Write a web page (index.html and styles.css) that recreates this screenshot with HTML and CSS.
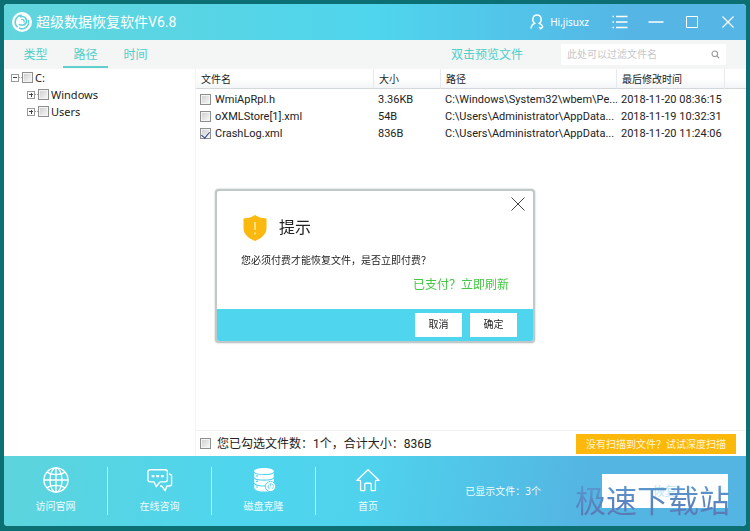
FILE: index.html
```html
<!DOCTYPE html>
<html lang="zh-CN">
<head>
<meta charset="utf-8">
<meta name="viewport" content="width=device-width, initial-scale=1">
<title>超级数据恢复软件V6.8</title>
<link rel="stylesheet" href="styles.css">
</head>
<body>
<div class="window">
  <header class="titlebar">
    <svg class="logo" viewBox="0 0 20 20"><circle cx="10" cy="10" r="10" fill="#fff"/><path d="M5.200 14.800A6.800 6.800 0 0 1 9 3.300M7.500 16.300A6.800 6.800 0 0 0 16.500 8.500M8.500 4.700c4.500-1 7.500 3 5.500 6.300-1.200 2-4 2.600-6.500 1.500" fill="none" stroke="#5fd2da" stroke-width="1.600" stroke-linecap="round"/><path d="M9 7.500c2.500-.5 4 1.500 2.800 3.200" fill="none" stroke="#5fd2da" stroke-width="1.300"/></svg>
    <h1 class="app-name">超级数据恢复软件V6.8</h1>
    <button class="user" type="button">
      <svg viewBox="0 0 14 16"><path d="M1 14.500c.3-3 1.700-4.500 3.700-5.200C1.500 7 2.400 1 7 1s5.500 6 2.300 8.300c1.700.8 2.900 2 3.300 3.200M9 13l1.800 1.800L13 12.500" fill="none" stroke="#fff" stroke-width="1.400"/></svg>
      <span>Hi,jisuxz</span>
    </button>
    <button class="control" type="button" aria-label="菜单"><svg viewBox="0 0 16 14"><path d="M4 1.500h11.500M4 7h11.500M4 12.500h11.500M.5 1.500H2M.5 7H2M.5 12.500H2" stroke="#fff" stroke-width="1.400"/></svg></button>
    <button class="control" type="button" aria-label="最小化"><svg viewBox="0 0 16 14"><path d="M.5 7h15" stroke="#fff" stroke-width="1.500"/></svg></button>
    <button class="control" type="button" aria-label="最大化"><svg viewBox="0 0 16 14"><path d="M2.500 1.500h11v11h-11z" fill="none" stroke="#fff"/></svg></button>
    <button class="control" type="button" aria-label="关闭"><svg viewBox="0 0 16 14"><path d="M2.500 1.500l11 11M13.500 1.500l-11 11" stroke="#fff" stroke-width="1.200"/></svg></button>
  </header>

  <div class="toolbar">
    <nav class="tabs">
      <a class="tab" href="#type">类型</a>
      <a class="tab tab-active" href="#path">路径</a>
      <a class="tab" href="#time">时间</a>
    </nav>
    <span class="hint">双击预览文件</span>
    <form class="search">
      <input type="text" aria-label="过滤文件名" placeholder="此处可以过滤文件名">
      <button type="button" aria-label="搜索"><svg viewBox="0 0 10 10"><circle cx="4.200" cy="4.200" r="3.100" fill="none" stroke="#999" stroke-width="1.200"/><path d="M6.500 6.500L9 9" stroke="#999" stroke-width="1.400"/></svg></button>
    </form>
  </div>

  <main class="content">
    <aside class="sidebar">
      <ul class="tree">
        <li>
          <div class="node"><button class="toggle toggle-open" type="button" aria-label="折叠 C:"></button><label><input class="check" type="checkbox"><span>C:</span></label></div>
          <ul class="branch">
            <li class="node"><button class="toggle" type="button" aria-label="展开 Windows"></button><label><input class="check" type="checkbox"><span>Windows</span></label></li>
            <li class="node"><button class="toggle" type="button" aria-label="展开 Users"></button><label><input class="check" type="checkbox"><span>Users</span></label></li>
          </ul>
        </li>
      </ul>
    </aside>
    <section class="files">
      <table class="file-table">
        <colgroup><col class="col-name"><col class="col-size"><col class="col-path"><col class="col-date"><col class="col-rest"></colgroup>
        <thead><tr><th>文件名</th><th>大小</th><th>路径</th><th>最后修改时间</th><th></th></tr></thead>
        <tbody>
          <tr><td><label><input class="check" type="checkbox"><span>WmiApRpl.h</span></label></td><td>3.36KB</td><td>C:\Windows\System32\wbem\Pe...</td><td>2018-11-20 08:36:15</td><td></td></tr>
          <tr><td><label><input class="check" type="checkbox"><span>oXMLStore[1].xml</span></label></td><td>54B</td><td>C:\Users\Administrator\AppData...</td><td>2018-11-19 10:32:31</td><td></td></tr>
          <tr><td><label><input class="check" type="checkbox" checked><span>CrashLog.xml</span></label></td><td>836B</td><td>C:\Users\Administrator\AppData...</td><td>2018-11-20 11:24:06</td><td></td></tr>
        </tbody>
      </table>
      <div class="summary">
        <label><input class="check" type="checkbox"><span>您已勾选文件数<span class="mark">：</span>1个，合计大小<span class="mark">：</span>836B</span></label>
        <button class="deep-scan" type="button">没有扫描到文件<span class="mark">？</span>试试深度扫描</button>
      </div>
    </section>
  </main>

  <footer class="footer">
    <nav class="links">
      <a href="#site"><svg viewBox="0 0 28 28"><g fill="none" stroke="#fff" stroke-width="1.400"><circle cx="14" cy="14" r="13"/><ellipse cx="14" cy="14" rx="6.500" ry="13"/><path d="M14 1v26M1 14h26M4 5.500c5 3.500 15 3.500 20 0M4 22.500c5-3.500 15-3.500 20 0"/></g></svg><span>访问官网</span></a>
      <a href="#chat"><svg viewBox="0 0 28 28"><g fill="none" stroke="#fff" stroke-width="1.500" stroke-linejoin="round"><path d="M3.500 3h16q2.500 0 2.500 2.500v8q0 2.500-2.500 2.500H14l-4 5-2.500-5h-4Q1 16 1 13.500v-8Q1 3 3.500 3z"/><path d="M24 7.500q2.500.5 2.500 2.500v8q0 2.500-2.500 2.500h-2.500l-2 5-3.500-5h-2"/></g><path d="M5 8.500h3v2.500H5zM10 8.500h3v2.500h-3zM15 8.500h3v2.500h-3z" fill="#fff"/></svg><span>在线咨询</span></a>
      <a href="#clone"><svg viewBox="0 0 28 28"><path d="M3.500 4.500C3.500 0 24.500 0 24.500 4.500v17.500c0 6-21 6-21 0z" fill="#fff"/><path d="M3.500 5.500c1 3.500 20 3.500 21 0M3.500 11.500c1 3.500 20 3.500 21 0M3.500 17.500c1 3 11 3.500 13 2.500M5.500 9.500h2M5.500 15.500h2M5.500 21.500h2" fill="none" stroke="#4ed3ec" stroke-width="1.200"/><circle cx="21" cy="21" r="5.500" fill="#fff" stroke="#4ed3ec"/><path d="M19 22.500a2.800 2.800 0 1 1 3.500 1M18 21l1 2 2-.5M21 18v3" fill="none" stroke="#72d9ee"/></svg><span>磁盘克隆</span></a>
      <a href="#home"><svg viewBox="0 0 28 28"><path d="M14 3L2 14.500h3.500q.5 0 .5 1v9q0 1 1 1h3.500v-7q0-1 1-1h5q1 0 1 1v7H21q1 0 1-1v-9q0-1 .5-1H26z" fill="none" stroke="#fff" stroke-width="1.400" stroke-linejoin="round"/></svg><span>首页</span></a>
    </nav>
    <span class="shown">已显示文件<span class="mark">：</span>3个</span>
    <div class="recover-area">
      <button class="recover" type="button">恢复</button>
      <span class="site-mark">极速下载站</span>
    </div>
  </footer>
</div>

<section class="modal" role="dialog" aria-labelledby="modal-title">
  <div class="modal-body">
    <div class="modal-head">
      <svg viewBox="0 0 24 26"><path d="M12 0Q16 3 23.500 3.500V13c0 7-6 10.500-11.500 13C6.500 23.500.5 20 .5 13V3.500Q8 3 12 0z" fill="#fbb80f"/><path d="M12 7v8M12 17.500v2" stroke="#fff2ae" stroke-width="1.400"/></svg>
      <h2 id="modal-title">提示</h2>
    </div>
    <p>您必须付费才能恢复文件，是否立即付费<span class="mark">？</span></p>
    <a class="refresh" href="#refresh">已支付<span class="mark">？</span>立即刷新</a>
  </div>
  <div class="modal-actions">
    <button type="button">取消</button>
    <button type="button">确定</button>
  </div>
  <button class="modal-close" type="button" aria-label="关闭提示"><svg viewBox="0 0 14 14"><path d="M.5.5l13 13M13.500.5l-13 13" stroke="#444"/></svg></button>
</section>
</body>
</html>
```

FILE: styles.css
```css
* {
  box-sizing: border-box;
}

body {
  margin: 0;
  padding: 4px 4px 5px;
  min-height: 100vh;
  display: flex;
  background: #0b6f73;
  color: #222;
  font: 11px/17px "Noto Sans", "Noto Sans CJK SC", sans-serif;
}

button,
input {
  font: inherit;
  color: inherit;
  margin: 0;
}

button {
  padding: 0;
  border: 0;
  background: none;
}

a {
  text-decoration: none;
}

svg {
  display: block;
}

label {
  display: flex;
  align-items: center;
}

/* Full-width punctuation centred in its cell */
.mark {
  font-family: "Noto Sans CJK TC", sans-serif;
}

.window {
  flex: 1;
  min-width: 0;
  display: flex;
  flex-direction: column;
  overflow: hidden;
  border-radius: 4px;
  background: #fff;
}

/* Title bar */
.titlebar {
  display: flex;
  align-items: center;
  height: 36px;
  padding: 0 10px 0 8px;
  background: linear-gradient(90deg, #62d5dc, #4fd5ed 50%, #55b5e5 85%);
  color: #fff;
}

.logo {
  width: 20px;
  height: 20px;
}

.app-name {
  flex: 1;
  margin: 0 0 0 4px;
  font-family: Roboto, "Noto Sans CJK SC", sans-serif;
  font-size: 14px;
  font-weight: 400;
}

.user {
  display: flex;
  align-items: center;
  gap: 6px;
  margin-right: 3px;
  font-size: 10px;
}

.user svg {
  width: 14px;
  height: 16px;
}

.control {
  width: 16px;
  margin-left: 20px;
}

.control svg {
  width: 16px;
  height: 14px;
}

/* Tabs and search */
.toolbar {
  display: flex;
  align-items: center;
  height: 29px;
  padding-right: 20px;
  background: #f4f5f5;
  color: #4fcfc9;
  font-size: 12px;
}

.tabs {
  flex: 1;
  display: flex;
  gap: 5px;
  padding-left: 9px;
}

.tab {
  width: 45px;
  height: 27px;
  border-bottom: 2px solid transparent;
  color: inherit;
  line-height: 28px;
  text-align: center;
}

.tab-active {
  border-color: #5fd0cc;
}

.search {
  display: flex;
  align-items: center;
  width: 165px;
  height: 21px;
  margin-left: 38px;
  padding: 0 6px;
  background: #fff;
  font-size: 10px;
}

.search input {
  flex: 1;
  min-width: 0;
  padding: 0;
  border: 0;
  outline: 0;
  background: none;
}

.search input::placeholder {
  color: #c6c6c6;
}

.search svg {
  width: 9px;
  height: 9px;
}

/* Check boxes */
.check {
  appearance: none;
  flex: none;
  display: grid;
  place-items: center;
  width: 11px;
  height: 11px;
  border: 1px solid #8e8f8f;
  background: linear-gradient(135deg, #ccc, #fafafa);
  box-shadow: inset 0 0 0 1px #f4f4f4;
}

.check:checked::before {
  content: "";
  width: 4px;
  height: 7px;
  border: solid #2b3f8e;
  border-width: 0 1px 1px 0;
  transform: rotate(40deg);
}

/* Folder tree */
.content {
  flex: 1;
  display: flex;
  min-height: 0;
}

.sidebar {
  width: 192px;
  border-right: 1px solid #f3f3f3;
}

.tree,
.branch {
  margin: 0;
  padding: 0;
  list-style: none;
}

.tree {
  padding: 0 7px;
}

.branch {
  padding-left: 16px;
}

.node {
  display: flex;
  align-items: center;
  height: 17px;
}

.node label {
  gap: 2px;
}

.node label::before {
  content: "";
  width: 3px;
  margin-right: -2px;
  border-top: 1px dotted #999;
}

.toggle {
  width: 8px;
  height: 8px;
  border: 1px solid #999;
  background:
    linear-gradient(#444, #444) center / 4px 1px no-repeat,
    linear-gradient(#444, #444) center / 1px 4px no-repeat;
}

.toggle-open {
  background: linear-gradient(#444, #444) center / 4px 1px no-repeat;
}

/* File list */
.files {
  flex: 1;
  min-width: 0;
  display: flex;
  flex-direction: column;
}

.file-table {
  width: 100%;
  table-layout: fixed;
  border-spacing: 0;
  border-collapse: separate;
  font-family: Roboto, "Noto Sans CJK SC", sans-serif;
}

.col-name {
  width: 178px;
}

.col-size {
  width: 67px;
}

.col-date {
  width: 108px;
}

.col-rest {
  width: 21px;
}

.file-table th {
  height: 20px;
  padding: 1px 0 0 5px;
  border-right: 1px solid #e6eaee;
  border-bottom: 1px solid #d5d8db;
  background: linear-gradient(#fff 50%, #f3f5f7);
  font-size: 10px;
  font-weight: 400;
  text-align: left;
}

.file-table th:last-child {
  border-right: 0;
}

.file-table td {
  height: 17px;
  padding: 0 0 0 4px;
  white-space: nowrap;
}

.file-table tbody tr:first-child td {
  height: 19px;
  padding-top: 2px;
}

.file-table label {
  gap: 4px;
}

.summary {
  display: flex;
  align-items: center;
  justify-content: space-between;
  height: 26px;
  margin-top: auto;
  padding: 0 10px 0 4px;
  border-top: 1px solid #f2f2f2;
  font-family: Roboto, "Noto Sans CJK SC", sans-serif;
  font-size: 12px;
}

.summary label {
  gap: 6px;
}

.deep-scan {
  width: 160px;
  height: 20px;
  background: #fcb90b;
  color: #fff5d8;
  font-size: 10px;
}

/* Footer */
.footer {
  display: flex;
  align-items: center;
  height: 70px;
  padding-right: 18px;
  background: linear-gradient(100deg, #5dd4dc, #4fd5ed 30%, #4fd3ed 48%, #54b5e2 78%);
  color: #eefcff;
  font-size: 10px;
}

.links {
  flex: 1;
  display: flex;
}

.links a {
  display: flex;
  flex-direction: column;
  align-items: center;
  gap: 5px;
  width: 104px;
  height: 48px;
  border-right: 1px solid #c4f2f7;
  color: inherit;
}

.links a:last-child {
  border-right: 0;
}

.links svg {
  width: 28px;
  height: 28px;
}

.recover-area {
  position: relative;
  margin-left: 61px;
}

.recover {
  display: block;
  width: 126px;
  height: 34px;
  background: #fff;
  color: #b8e2f2;
  font-size: 12px;
}

.site-mark {
  position: absolute;
  right: -2px;
  bottom: -10px;
  background: linear-gradient(#5b9bd2, #5b75b2);
  background-clip: text;
  color: transparent;
  font-size: 31px;
  line-height: 36px;
  white-space: nowrap;
  pointer-events: none;
}

/* Payment prompt */
.modal {
  position: fixed;
  top: 50%;
  left: 50%;
  width: 320px;
  transform: translate(-50%, -50%);
  overflow: hidden;
  border: 2px solid #bfc9ca;
  border-radius: 4px;
  background: #fff;
  box-shadow: 0 0 2px #bbb;
}

.modal-body {
  display: flex;
  flex-direction: column;
  padding: 24px 24px 16px;
}

.modal-head {
  display: flex;
  align-items: center;
  gap: 12px;
  padding-left: 2px;
}

.modal-head svg {
  width: 24px;
  height: 26px;
}

.modal h2 {
  margin: 0;
  font-size: 16px;
  font-weight: 400;
}

.modal p {
  margin: 10px 0 6px;
  font-size: 10px;
}

.refresh {
  align-self: flex-end;
  color: #43c743;
  font-size: 12px;
}

.modal-actions {
  display: flex;
  justify-content: flex-end;
  gap: 8px;
  padding: 4px 16px;
  background: #4fd5ed;
}

.modal-actions button {
  width: 47px;
  height: 24px;
  background: #fff;
  font-size: 10px;
}

.modal-close {
  position: absolute;
  top: 6px;
  right: 8px;
}

.modal-close svg {
  width: 14px;
  height: 14px;
}
```
